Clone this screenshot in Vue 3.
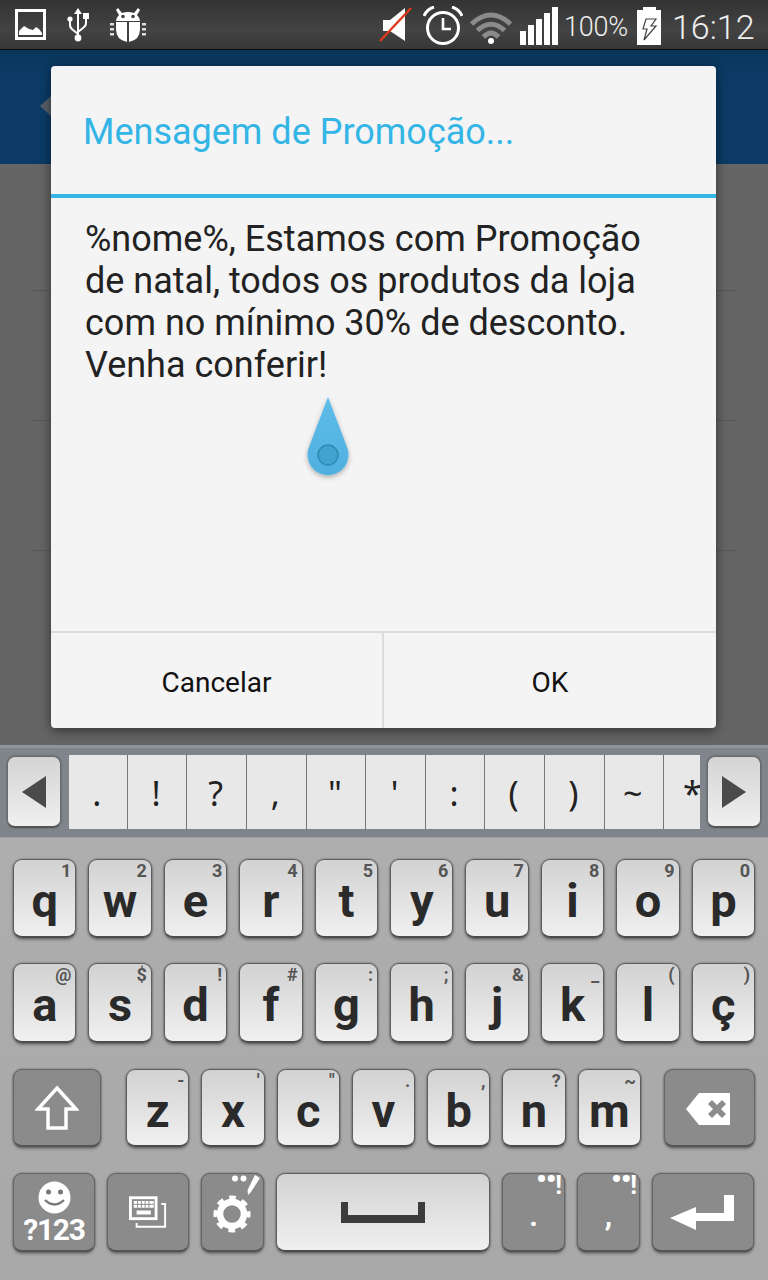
<script setup>
const row1 = [['q','1'],['w','2'],['e','3'],['r','4'],['t','5'],['y','6'],['u','7'],['i','8'],['o','9'],['p','0']]
const row2 = [['a','@'],['s','$'],['d','!'],['f','#'],['g',':'],['h',';'],['j','&'],['k','_'],['l','('],['ç',')']]
const row3 = [['z','-'],['x',"'"],['c','"'],['v','.'],['b',','],['n','?'],['m','~']]
const candidates = ['.','!','?',',','"',"'",':','(',')','~','*']
const listRows = [1,2,3]
</script>

<template>
  <div class="screen">
    <div class="status">
      <svg class="ic-img" width="32" height="32" viewBox="0 0 32 32">
        <rect x="1.5" y="1.5" width="28" height="28" fill="none" stroke="#fff" stroke-width="3"/>
        <path d="M4 26v-4l5-5 5 3 4 1 3-3 3 2 3 4v2z" fill="#fff"/>
      </svg>
      <svg class="ic-usb" width="22" height="36" viewBox="0 0 22 36">
        <path d="M11 1l4 6h-3v21h-2V7H7z" fill="#fff"/>
        <circle cx="11" cy="31" r="3.4" fill="#fff"/>
        <path d="M3 12v6q0 3 3 5l5 4M19 11v5q0 3-3 5l-5 4" fill="none" stroke="#fff" stroke-width="2"/>
        <circle cx="3" cy="12" r="2.6" fill="#fff"/>
        <rect x="16" y="6" width="6" height="6" fill="#fff"/>
      </svg>
      <svg class="ic-bug" width="36" height="36" viewBox="0 0 36 36">
        <path d="M8 1l4 5q6-2 12 0l4-5 2 2-3 5q3 3 3 6H6q0-3 3-6L6 3z" fill="#fff"/>
        <circle cx="13" cy="9.5" r="1.8" fill="#444"/><circle cx="23" cy="9.5" r="1.8" fill="#444"/>
        <path d="M6 15h11v20Q6 33 6 22zM19 15h11v7q0 11-11 13z" fill="#fff"/>
        <path d="M0 16h4v2.500H0zM0 21h4v2.500H0zM0 26h4v2.500H0zM32 16h4v2.500h-4zM32 21h4v2.500h-4zM32 26h4v2.500h-4z" fill="#ddd"/>
      </svg>
      <div class="status-gap"></div>
      <svg class="ic-mute" width="34" height="36" viewBox="0 0 34 36">
        <path d="M4 13h7L26 1v33L11 24H4z" fill="#fff"/>
        <path d="M1 34L32 1" stroke="#e03a1c" stroke-width="2.400"/>
      </svg>
      <svg class="ic-alarm" width="40" height="40" viewBox="0 0 40 40">
        <circle cx="20" cy="22" r="15.500" fill="none" stroke="#fff" stroke-width="3"/>
        <path d="M20 12v11h8" fill="none" stroke="#fff" stroke-width="2.600"/>
        <path d="M1 10Q4 3 11 1M39 10Q36 3 29 1" fill="none" stroke="#fff" stroke-width="3"/>
      </svg>
      <svg class="ic-wifi" width="44" height="34" viewBox="0 0 44 34">
        <path d="M2.500 14Q22-4 41.500 14M8.500 20.500Q22 8 35.500 20.500M14.500 27Q22 19 29.500 27" fill="none" stroke="#8b8b8b" stroke-width="5"/>
        <circle cx="22" cy="31" r="3" fill="#fff"/>
      </svg>
      <svg class="ic-signal" width="38" height="38" viewBox="0 0 38 38">
        <path d="M0 24h6v14H0zM8 18h6v20H8zM16 12h6v26h-6zM24 6h6v32h-6zM32 0h6v38h-6z" fill="#fff"/>
      </svg>
      <span class="pct">100%</span>
      <svg class="ic-batt" width="24" height="38" viewBox="0 0 24 38">
        <path d="M6 0h13v3h5v35H0V3h6z" fill="#fff"/>
        <path d="M9 12h10l-5 7h5L7 33l3-11H6z" fill="none" stroke="#444" stroke-width="1.200"/>
      </svg>
      <span class="time">16:12</span>
    </div>

    <div class="appbar">
      <svg width="12" height="22" viewBox="0 0 12 22"><path d="M12 0L0 11l12 11z" fill="#565f68"/></svg>
    </div>

    <div class="dim">
      <div v-for="r in listRows" :key="r" class="list-row"></div>
    </div>

    <div class="keyboard">
      <div class="strip">
        <div class="arrow"><svg width="24" height="32" viewBox="0 0 24 32"><path d="M24 0v32L0 16z" fill="#4a4a4a"/></svg></div>
        <div class="cands">
          <span v-for="c in candidates" :key="c" class="cand">{{ c }}</span>
        </div>
        <div class="arrow"><svg width="24" height="32" viewBox="0 0 24 32"><path d="M0 0v32l24-16z" fill="#4a4a4a"/></svg></div>
      </div>

      <div class="keys">
        <div class="row r1">
          <div v-for="k in row1" :key="k[0]" class="key letter"><span class="hint">{{ k[1] }}</span>{{ k[0] }}</div>
        </div>
        <div class="row r2">
          <div v-for="k in row2" :key="k[0]" class="key letter"><span class="hint">{{ k[1] }}</span>{{ k[0] }}</div>
        </div>
        <div class="row r3">
          <div class="key fn shift">
            <svg width="44" height="46" viewBox="0 0 44 46"><path d="M22 3L41 24H31v19H13V24H3z" fill="none" stroke="#fff" stroke-width="3.500"/></svg>
          </div>
          <div class="letters">
            <div v-for="k in row3" :key="k[0]" class="key letter"><span class="hint">{{ k[1] }}</span>{{ k[0] }}</div>
          </div>
          <div class="key fn del">
            <svg width="46" height="34" viewBox="0 0 46 34">
              <path d="M14 1h31v32H14L1 17z" fill="#fff"/>
              <path d="M23 12l4-4 5 5 5-5 4 4-5 5 5 5-4 4-5-5-5 5-4-4 5-5z" fill="#8c8c8c"/>
            </svg>
          </div>
        </div>
        <div class="row r4">
          <div class="key fn sym">
            <svg width="33" height="33" viewBox="0 0 33 33">
              <circle cx="16.500" cy="16.500" r="16" fill="#fff"/>
              <circle cx="10.500" cy="11" r="2.500" fill="#777"/><circle cx="22.500" cy="11" r="2.500" fill="#777"/>
              <path d="M7 19q9.500 9 19 0" fill="none" stroke="#777" stroke-width="2.400"/>
            </svg>
            <span class="sym-t">?123</span>
          </div>
          <div class="key fn sym2">
            <svg width="38" height="32" viewBox="0 0 40 33">
              <path d="M8 28v4h30V8h-4" fill="none" stroke="#fff" stroke-width="2"/>
              <rect x="1.500" y="1.500" width="27" height="22" fill="none" stroke="#fff" stroke-width="3"/>
              <path d="M5 5h21v7H5zM8 15h15v4H8z" fill="#fff"/>
              <path d="M9 5v7M13 5v7M17 5v7M21 5v7M5 8.500h21" stroke="#8c8c8c" stroke-width="1"/>
            </svg>
          </div>
          <div class="key fn gear">
            <svg class="gear-top" width="30" height="22" viewBox="0 0 30 22">
              <circle cx="4" cy="4.500" r="3" fill="#fff"/><circle cx="12.500" cy="4.500" r="3" fill="#fff"/>
              <path d="M24 1l5 3-9 14-3 3-.5-5z" fill="#fff"/>
            </svg>
            <svg class="gear-ic" width="38" height="38" viewBox="0 0 38 38">
              <circle cx="19" cy="19" r="12" fill="none" stroke="#fff" stroke-width="6.500"/>
              <circle cx="19" cy="19" r="16" fill="none" stroke="#fff" stroke-width="5" stroke-dasharray="6.560 6.000" stroke-dashoffset="3.200"/>
            </svg>
          </div>
          <div class="key space">
            <svg width="84" height="21" viewBox="0 0 84 21"><path d="M0 0h7v13h70V0h7v21H0z" fill="#3c3c3c"/></svg>
          </div>
          <div class="key fn punct"><span class="orn"><span class="dots">••</span>!</span><span class="pm">.</span></div>
          <div class="key fn punct"><span class="orn"><span class="dots">••</span>!</span><span class="pm">,</span></div>
          <div class="key fn enter">
            <svg width="66" height="36" viewBox="0 0 66 36"><path d="M54 1h10v26H26v9L0 24l26-11v6h28z" fill="#fff"/></svg>
          </div>
        </div>
      </div>
    </div>

    <div class="dialog">
      <div class="d-title">Mensagem de Promoção...</div>
      <div class="d-body">%nome%, Estamos com Promoção<br>de natal, todos os produtos da loja<br>com no mínimo 30% de desconto.<br>Venha conferir!</div>
      <div class="d-btns">
        <div class="d-btn">Cancelar</div>
        <div class="d-btn">OK</div>
      </div>
    </div>

    <svg class="handle" width="56" height="92" viewBox="0 0 56 92">
      <defs>
        <linearGradient id="dropG" x1="0" y1="0" x2="0" y2="1">
          <stop offset="0" stop-color="#5fbce8"/><stop offset="1" stop-color="#4fb0e0"/>
        </linearGradient>
        <filter id="dropS" x="-30%" y="-20%" width="160%" height="140%">
          <feDropShadow dx="0" dy="2" stdDeviation="2.500" flood-color="#000" flood-opacity=".3"/>
        </filter>
      </defs>
      <path d="M28 4L47 54A20.500 20.500 0 1 1 9 54Z" fill="url(#dropG)" filter="url(#dropS)"/>
      <circle cx="28" cy="62" r="10" fill="#3fa3cd" stroke="#2f8ab3" stroke-width="1.500"/>
    </svg>
  </div>
</template>

<style scoped>
.screen {
  position: relative;
  width: 768px;
  height: 1280px;
  overflow: hidden;
  display: flex;
  flex-direction: column;
  font-family: Roboto, sans-serif;
  background: #666;
}
.status {
  height: 49px;
  flex: none;
  border-bottom: 1px solid #0a0a0a;
  background: linear-gradient(#333 0, #434343 60%, #383838 100%);
  display: flex;
  align-items: center;
  color: #eee;
  padding-left: 15px;
}
.status svg { flex: none; }
.ic-usb { margin-left: 20px; }
.ic-bug { margin-left: 21px; }
.status-gap { flex: 1; }
.ic-mute { margin-right: 10px; }
.ic-alarm { margin-right: 6px; margin-top: 2px; }
.ic-wifi { margin-right: 7px; margin-top: 4px; }
.ic-signal { margin-right: 8px; margin-top: 2px; }
.pct { font-size: 27px; font-weight: 300; width: 73px; margin-left: -2px; margin-top: 4px; letter-spacing: -0.2px; }
.ic-batt { margin-right: 11px; margin-top: 2px; }
.time { font-size: 34px; font-weight: 300; width: 96px; margin-top: 4px; }
.appbar {
  height: 114px;
  flex: none;
  background: linear-gradient(#0a3559 0, #0b3b66 20%, #0b3b66 100%);
  display: flex;
  align-items: center;
  padding-left: 40px;
  padding-bottom: 2px;
  box-sizing: border-box;
  box-shadow: 0 2px 4px rgba(0, 0, 0, .25);
}
.dim {
  height: 581px;
  flex: none;
  padding: 0 32px;
  background: #656565;
}
.list-row { height: 129px; border-bottom: 1px solid #585858; }
.list-row:first-child { height: 126px; }
.keyboard {
  flex: 1;
  display: flex;
  flex-direction: column;
  background: #acacac;
}
.strip {
  height: 93px;
  flex: none;
  box-sizing: border-box;
  background: #7f858a;
  border-top: 3px solid #8e9499;
  border-bottom: 1px solid #9aa0a2;
  padding: 7px 7px 0;
  display: flex;
  align-items: flex-start;
}
.arrow {
  width: 54px;
  height: 72px;
  margin-top: 1px;
  box-sizing: border-box;
  flex: none;
  border-radius: 8px;
  background: linear-gradient(#d4d4d4, #f0f0f0);
  border: 1px solid #6a6a6a;
  border-bottom: 2px solid #555;
  box-shadow: 0 0 2px rgba(0, 0, 0, .4);
  display: flex;
  align-items: center;
  justify-content: center;
}
.cands {
  flex: 1;
  margin: 0 7px 0 8px;
  height: 74px;
  display: flex;
  overflow: hidden;
  background: #e8e8e8;
}
.cand {
  flex: none;
  width: 59.600px;
  box-sizing: border-box;
  height: 74px;
  padding-right: 2px;
  border-right: 1px solid #777;
  text-align: center;
  font-size: 34px;
  line-height: 77px;
  color: #222;
  font-family: "Noto Sans", Roboto, sans-serif;
}
.cand:first-child { width: 58.800px; }
.keys {
  flex: 1;
  padding: 21px 13px 0;
  background: linear-gradient(#aeaeae, #a8a8a8);
}
.row { display: flex; gap: 12px; }
.r1 { height: 79px; margin-bottom: 25px; }
.r2 { height: 80px; margin-bottom: 26px; }
.r3 { height: 78px; margin-bottom: 26px; }
.r4 { height: 79px; }
.key {
  position: relative;
  box-sizing: border-box;
  flex: none;
  display: flex;
  align-items: center;
  justify-content: center;
  border-radius: 9px;
  border: 1px solid #5e5e5e;
  border-bottom: 2px solid #4c4c4c;
  box-shadow: 0 0 2px rgba(0, 0, 0, .45), 0 2px 3px rgba(0, 0, 0, .3);
  background: linear-gradient(#d2d2d2, #f0f0f0);
}
.letter {
  width: 63.400px;
  flex: 1;
  align-items: flex-start;
  padding-top: 18px;
  font-size: 47px;
  line-height: 46px;
  font-weight: 700;
  color: #2a2a2a;
}
.hint {
  position: absolute;
  top: 2px;
  right: 4px;
  font-size: 18px;
  line-height: 17px;
  font-weight: 700;
  color: #555;
}
.letters { display: flex; gap: 12px; width: 515px; margin-left: 13px; margin-right: 11px; flex: none; }
.fn { background: #8b8b8b; border-color: #666; border-bottom-color: #555; }
.shift { width: 88px; }
.del { width: 91px; padding-right: 4px; padding-top: 2px; }
.sym { width: 82px; flex-direction: column; padding-top: 2px; }
.sym-t { color: #fff; font-size: 30px; line-height: 30px; font-weight: 700; letter-spacing: -1.300px; margin-top: 1px; }
.sym2 { width: 82px; }
.gear { width: 63px; }
.gear-top { position: absolute; top: 0; right: 2px; }
.gear-ic { margin-top: 3px; margin-right: 1px; }
.space { width: 214px; }
.punct { width: 63px; }
.orn {
  position: absolute;
  top: -1px;
  right: 2px;
  font-size: 25px;
  line-height: 25px;
  color: #fff;
  font-weight: 700;
}
.dots { font-size: 30px; letter-spacing: -1.200px; vertical-align: 5px; line-height: 0; }
.pm { color: #fff; font-size: 30px; font-weight: 700; line-height: 30px; margin-top: 8px; }
.enter { width: 102px; }
.dialog {
  position: absolute;
  left: 51px;
  top: 66px;
  width: 665px;
  height: 662px;
  display: flex;
  flex-direction: column;
  background: #f4f4f5;
  border-radius: 4px;
  box-shadow: 0 3px 12px rgba(0, 0, 0, .5);
}
.d-title {
  height: 132px;
  flex: none;
  box-sizing: border-box;
  padding: 42px 32px 0;
  font-size: 36px;
  line-height: 48px;
  color: #33b5e5;
  border-bottom: 4px solid #33b5e5;
}
.d-body {
  flex: 1;
  padding: 20px 34px 0;
  font-size: 36px;
  line-height: 42px;
  color: #222;
}
.d-btns {
  flex: none;
  height: 97px;
  box-sizing: border-box;
  border-top: 2px solid #dcdcdc;
  display: flex;
}
.d-btn {
  flex: 1;
  display: flex;
  align-items: center;
  justify-content: center;
  padding-top: 3px;
  font-size: 28px;
  color: #111;
}
.d-btn:first-child { flex: none; width: 333px; box-sizing: border-box; border-right: 2px solid #dcdcdc; }
.handle { position: absolute; left: 300px; top: 393px; }
</style>

<style>
html, body { margin: 0; background: #666; }
</style>
